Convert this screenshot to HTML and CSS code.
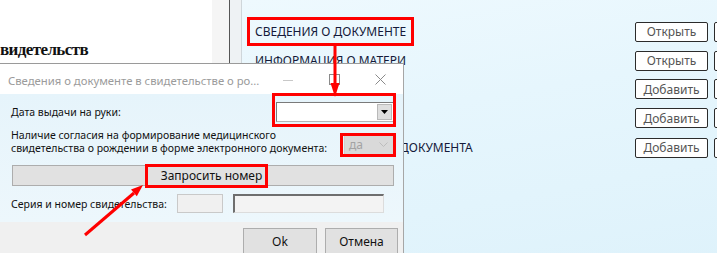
FILE: index.html
```html
<!DOCTYPE html>
<html lang="ru">
<head>
<meta charset="utf-8">
<title>Сведения о документе</title>
<link rel="stylesheet" href="styles.css">
</head>
<body>
<div class="screen">
  <aside class="left-pane">
    <div class="left-main"><div class="doc-title">видетельств</div></div>
    <div class="left-strip"></div>
  </aside>
  <div class="splitter"></div>
  <main class="content">
    <div class="rows">
      <div class="row"><span class="label">СВЕДЕНИЯ О ДОКУМЕНТЕ</span><button class="btn">Открыть</button><button class="btn" aria-label="Удалить"></button></div>
      <div class="row"><span class="label">ИНФОРМАЦИЯ О МАТЕРИ</span><button class="btn">Открыть</button><button class="btn" aria-label="Удалить"></button></div>
      <div class="row"><span class="label"></span><button class="btn">Добавить</button><button class="btn" aria-label="Удалить"></button></div>
      <div class="row"><span class="label"></span><button class="btn">Добавить</button><button class="btn" aria-label="Удалить"></button></div>
      <div class="row"><span class="label tail">ДОКУМЕНТА</span><button class="btn">Добавить</button><button class="btn" aria-label="Удалить"></button></div>
    </div>
  </main>

  <div class="dialog">
    <div class="titlebar">
      <span class="title">Сведения о документе в свидетельстве о ро...</span>
      <div class="caption-btns">
        <span class="cap"><svg width="10" height="10" viewBox="0 0 10 10"><line x1="0" y1="5.5" x2="10" y2="5.5" stroke="#c8c8c8" stroke-width="1"/></svg></span>
        <span class="cap"><svg width="11" height="11" viewBox="0 0 11 11"><rect x="0.5" y="0.5" width="10" height="10" fill="none" stroke="#8a8a8a" stroke-width="1"/></svg></span>
        <span class="cap"><svg width="11" height="11" viewBox="0 0 11 11"><path d="M0.5 0.5 L10.5 10.5 M10.5 0.5 L0.5 10.5" stroke="#8a8a8a" stroke-width="1" fill="none"/></svg></span>
      </div>
    </div>
    <div class="dlg-body">
      <div class="f-row r1">
        <span class="f-label">Дата выдачи на руки:</span>
        <div class="date-field"><span class="dd-btn"><svg width="7" height="4" viewBox="0 0 7 4"><path d="M0 0 H7 L3.5 4 Z" fill="#000"/></svg></span></div>
      </div>
      <div class="f-row r2">
        <span class="f-label two">Наличие согласия на формирование медицинского<br>свидетельства о рождении в форме электронного документа:</span>
        <div class="combo"><span>да</span><svg width="9" height="5" viewBox="0 0 9 5"><path d="M0.5 0.5 L4.5 4.5 L8.5 0.5" stroke="#bdbdbd" fill="none"/></svg></div>
      </div>
      <button class="wide-btn">Запросить номер</button>
      <div class="r4">
        <span class="f-label">Серия и номер свидетельства:</span>
        <span class="inp small"></span>
        <span class="inp large"></span>
      </div>
    </div>
    <div class="footer">
      <button class="fbtn ok">Ok</button>
      <button class="fbtn cancel">Отмена</button>
    </div>
  </div>

  <svg class="annot" width="717" height="253" viewBox="0 0 717 253">
    <g fill="none" stroke="#ff0000" stroke-width="3">
      <rect x="248.5" y="18.5" width="164" height="26"/>
      <rect x="273.5" y="94.5" width="121" height="31"/>
      <rect x="341.5" y="134.5" width="53" height="21"/>
      <rect x="146.5" y="165.5" width="120" height="21"/>
      <line x1="335" y1="46" x2="335" y2="85"/>
      <line x1="85" y1="235" x2="134" y2="193"/>
    </g>
    <g fill="#ff0000">
      <polygon points="330.5,83 339.5,83 335,97"/>
      <polygon points="136.8,196.2 131,189.4 143,185"/>
    </g>
  </svg>
</div>
</body>
</html>
```

FILE: styles.css
```css
* { box-sizing: border-box; }
html, body { margin: 0; padding: 0; }
body { width: 717px; height: 253px; overflow: hidden; background: #fff; }

.screen {
  position: relative;
  display: flex;
  width: 717px;
  height: 253px;
  overflow: hidden;
  font-family: "Noto Sans", "Liberation Sans", sans-serif;
}

.left-pane {
  display: flex;
  width: 230px;
  flex: none;
  border-right: 1px solid #555;
}
.left-main { width: 212px; background: #fff; padding-top: 40px; }
.left-strip { flex: 1; background: #f5f5f5; }
.doc-title {
  font-family: "Liberation Serif", serif;
  font-size: 17px;
  font-weight: bold;
  letter-spacing: -0.6px;
  color: #111;
  line-height: 20px;
}

.splitter {
  width: 12px;
  flex: none;
  background: #eef2f4;
  border-right: 1px solid #cfd6da;
}

.content {
  flex: 1;
  background: linear-gradient(170deg, #eef9fe 0%, #e6f6fd 40%, #def2fb 100%);
  padding: 21px 0 0 13px;
}
.rows { display: flex; flex-direction: column; gap: 9px; }
.row {
  display: grid;
  grid-template-columns: 374px 73px 73px;
  column-gap: 6px;
  align-items: center;
  height: 20px;
}
.label {
  font-size: 12px;
  color: #141a3a;
  white-space: nowrap;
  line-height: 20px;
  padding-top: 1px;
}
.label.tail { padding-left: 145px; }
.btn {
  height: 20px;
  width: 73px;
  padding: 0;
  background: #fff;
  border: 1px solid #2b2b2b;
  border-radius: 2px;
  font-family: inherit;
  font-size: 12px;
  color: #555;
  line-height: 17px;
}

/* dialog window */
.dialog {
  position: absolute;
  left: 0;
  top: 63px;
  width: 404px;
  height: 192px;
  border-top: 1px solid #9a9a9a;
  border-right: 1px solid #a6a6a6;
  background: #e9f5fb;
  display: flex;
  flex-direction: column;
}
.titlebar {
  height: 30px;
  flex: none;
  background: #fff;
  display: flex;
  align-items: center;
  padding-left: 8px;
}
.title {
  font-size: 11.3px;
  color: #9b9b9b;
  white-space: nowrap;
  flex: 1;
  min-width: 0;
  overflow: hidden;
  padding-top: 2px;
}
.caption-btns { display: flex; height: 30px; flex: none; }
.cap {
  width: 46px;
  height: 30px;
  display: flex;
  align-items: center;
  justify-content: center;
  padding-top: 1px;
}

.dlg-body {
  flex: 1;
  padding: 8px 9px 0 11px;
  display: flex;
  flex-direction: column;
  background: linear-gradient(180deg, #e6f4fb 0%, #edf7fc 100%);
}
.f-row { display: flex; align-items: center; justify-content: space-between; }
.f-label { font-size: 10.5px; color: #111; white-space: nowrap; line-height: 14px; }
.r1 { height: 20px; }
.date-field {
  width: 118px;
  height: 20px;
  background: #fff;
  border: 1px solid #7a7a7a;
  border-bottom-color: #b5b5b5;
  display: flex;
  justify-content: flex-end;
  align-items: center;
  padding-right: 1px;
}
.dd-btn {
  width: 15px;
  height: 16px;
  background: #dedede;
  border: 1px solid #b9b9b9;
  display: flex;
  align-items: center;
  justify-content: center;
}

.r2 { margin-top: 7px; height: 26px; align-items: flex-end; }
.f-label.two { line-height: 13px; }
.combo {
  width: 50px;
  height: 21px;
  background: #d9d9d9;
  border: 1px solid #cfcfcf;
  display: flex;
  align-items: center;
  justify-content: space-between;
  padding: 0 5px 0 4px;
  font-size: 12px;
  color: #a3a3a3;
}

.wide-btn {
  margin-top: 10px;
  margin-left: 1px;
  height: 21px;
  width: 382px;
  background: #e1e1e1;
  border: 1px solid #adadad;
  font-family: inherit;
  font-size: 12px;
  color: #111;
  padding: 0 0 0 17px;
  line-height: 18px;
}

.r4 {
  margin-top: 8px;
  height: 19px;
  display: grid;
  grid-template-columns: 166px 46px 161px;
  align-items: center;
}
.inp { height: 19px; display: block; background: #f0f0f0; }
.inp.small { border: 1px solid #c9c9c9; }
.inp.large {
  margin-left: 10px;
  border: 1px solid #dcdcdc;
  border-top: 2px solid #6e6e6e;
  border-left: 2px solid #6e6e6e;
  background: #f3f3f3;
}

.footer {
  height: 33px;
  flex: none;
  background: #f0f0f0;
  display: flex;
  justify-content: flex-end;
  gap: 8px;
  padding: 6px 5px 0 0;
}
.fbtn {
  height: 26px;
  background: #e1e1e1;
  border: 1px solid #adadad;
  font-family: inherit;
  font-size: 12px;
  color: #111;
  padding: 0;
}
.fbtn.ok { width: 74px; }
.fbtn.cancel { width: 73px; }

.annot {
  position: absolute;
  left: 0;
  top: 0;
  pointer-events: none;
}
```
